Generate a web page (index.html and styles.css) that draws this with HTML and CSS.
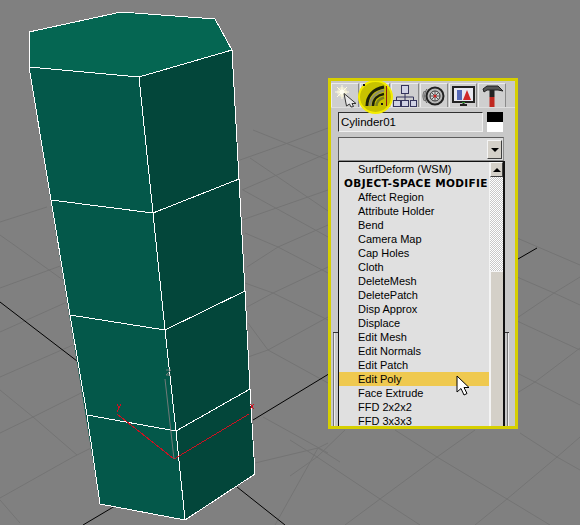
FILE: index.html
```html
<!DOCTYPE html>
<html lang="en">
<head>
<meta charset="utf-8">
<title>Modifier list</title>
<link rel="stylesheet" href="styles.css">
</head>
<body>
<main class="viewport">
  <svg class="scene" viewBox="0 0 580 525" width="580" height="525">
    <g class="grid">
      <path d="M0 222L47 207M0 235L17 247L63 280M0 288L63 265M0 332L67 302M0 377L73 345M0 390L33 417L77 455M0 433L33 417L83 392M0 498L73 457L93 447M0 500L20 523"/>
      <path d="M253 130L328 160M240 160L288 143L328 128M250 158L328 211M242 190L328 153M242 220L328 190M243 190L328 237M245 233L278 247L328 273M247 267L278 247L328 225M247 307L273 293L328 267M245 283L273 293L328 320M248 357L268 350L328 317M248 323L268 350L328 383M263 417L328 453M255 463L318 448L328 443M318 448L340 462M275 525L318 448"/>
      <path d="M290 440L317 457L380 499L420 525M395 430L437 457L507 499L550 525M520 433L557 457L580 470M345 430L317 457L290 476M475 525L507 499L557 457L580 437M345 525L380 499L437 457L475 430"/>
      <path d="M517 238L580 265M517 277L554 293L580 305M517 318L554 293L580 277M517 321L580 350M517 393L535 382L580 348M517 373L535 382L580 405"/>
    </g>
    <g class="axis">
      <path d="M0 302L77 361M253 420L518 259L537 248M83 525L115 506M237 487L285 525"/>
    </g>
    <polygon class="f-top" points="29,32 121,12 215,19 232,50 139,77 29,67"/>
    <polygon class="f-left" points="29,67 139,77 185,520 100,504"/>
    <polygon class="f-right" points="139,77 232,50 239,179 245,291 250,389 255,474 185,520"/>
    <g class="edge">
      <path d="M29 32L121 12L215 19L232 50L239 179L245 291L250 389L255 474L185 520L100 504L87 415L70 315L51 200L29 67Z"/>
      <path d="M29 67L139 77L232 50M139 77L153 213L165 330L176 431L185 520"/>
      <path d="M51 200L153 213L239 179M70 315L165 330L245 291M87 415L176 431L250 389"/>
    </g>
    <g class="gizmo-red">
      <path d="M117 414L174 459L249 414"/>
      <path d="M117 404L119 408L117 412M121 404L119 408M250 404L254 409M254 404L250 409"/>
    </g>
    <path class="gizmo-gray" d="M165 379L174 459M166 370H171L166 375H171"/>
  </svg>

  <aside class="panel">
    <nav class="tabs">
      <button class="tab">
        <svg viewBox="0 0 28 24" width="28" height="24">
          <circle cx="11" cy="8" r="5" class="glow"/>
          <path d="M11 1V15M4 8H18M6 3L16 13M16 3L6 13" class="spark"/>
          <circle cx="11" cy="8" r="2.500" fill="#fffef0"/>
          <path d="M13 9.500L25 19.500L21 19.500L22.500 22.500L20 23L18.500 20L15.500 22Z" fill="#e8e8e8" stroke="#333"/>
        </svg>
      </button>
      <button class="tab tab-active">
        <span class="halo"></span>
        <svg class="tab-icon" viewBox="0 0 28 24" width="28" height="24">
          <path d="M6 22C6 12 12 5 23 3" fill="none" stroke="#1b2108" stroke-width="3"/>
          <path d="M9 22C9 14 15 8 23 6.500" fill="none" stroke="#8f9068" stroke-width="2.500"/>
          <path d="M12 22C12 15 17 11 23 10" fill="none" stroke="#1b2108" stroke-width="2.500"/>
          <path d="M15.500 22C15.500 18 18 15 23 13.500" fill="none" stroke="#7c8020" stroke-width="2.500"/>
          <path d="M2 1H4M20 20H22" stroke="#111" stroke-width="2"/>
          <path d="M25.500 2V22" stroke="#8d1c10"/>
        </svg>
      </button>
      <button class="tab">
        <svg viewBox="0 0 26 24" width="26" height="24" class="hier">
          <rect x="9.500" y="1.500" width="7" height="8"/>
          <path d="M13 9.500V13M4.500 16V13H21.500V16M13 13V16"/>
          <rect x="1.500" y="16.500" width="7" height="6"/>
          <rect x="9.500" y="16.500" width="7" height="6"/>
          <rect x="18.500" y="16.500" width="6" height="6"/>
        </svg>
      </button>
      <button class="tab">
        <svg viewBox="0 0 26 24" width="26" height="24">
          <path d="M6 5C3 9 3 15 6 19M3.500 7C1.500 10 1.500 14 3.500 17" fill="none" stroke="#555"/>
          <circle cx="14" cy="12" r="8.500" fill="#b8b8b8" stroke="#222" stroke-width="2"/>
          <circle cx="14" cy="12" r="5" fill="#d8d8d8" stroke="#333"/>
          <path d="M14 7V17M9 12H19M10.500 8.500L17.500 15.500M17.500 8.500L10.500 15.500" stroke="#555"/>
          <circle cx="14" cy="12" r="1.500" fill="#d02020"/>
        </svg>
      </button>
      <button class="tab">
        <svg viewBox="0 0 26 24" width="26" height="24">
          <rect x="3" y="3" width="21" height="15" fill="#e8e8f0" stroke="#222" stroke-width="2"/>
          <rect x="7" y="6" width="5" height="10" fill="#5468b8"/>
          <path d="M13 16L17 6L21 16Z" fill="#d02828"/>
          <path d="M10 21H17M13.500 18V21" stroke="#222" stroke-width="2"/>
          <rect x="12" y="18" width="3" height="1" fill="#30a030"/>
        </svg>
      </button>
      <button class="tab">
        <svg viewBox="0 0 26 24" width="26" height="24">
          <path d="M4 5L8 2H19L24 7L19 6H8L5 8Z" fill="#555" stroke="#222"/>
          <rect x="10.500" y="6" width="5" height="7" fill="#222"/>
          <rect x="10.500" y="13" width="5" height="10" fill="#c02820"/>
        </svg>
      </button>
    </nav>

    <div class="name-row">
      <div class="name-field">Cylinder01</div>
      <div class="swatch"></div>
    </div>

    <div class="combo">
      <span class="combo-btn"><span class="arrow"></span></span>
    </div>

    <section class="stack">
      <div class="stack-frame"></div>
    </section>

    <div class="dropdown">
      <ul class="items">
        <li>SurfDeform (WSM)</li>
        <li class="heading">OBJECT-SPACE MODIFIE</li>
        <li>Affect Region</li>
        <li>Attribute Holder</li>
        <li>Bend</li>
        <li>Camera Map</li>
        <li>Cap Holes</li>
        <li>Cloth</li>
        <li>DeleteMesh</li>
        <li>DeletePatch</li>
        <li>Disp Approx</li>
        <li>Displace</li>
        <li>Edit Mesh</li>
        <li>Edit Normals</li>
        <li>Edit Patch</li>
        <li class="selected">Edit Poly</li>
        <li>Face Extrude</li>
        <li>FFD 2x2x2</li>
        <li>FFD 3x3x3</li>
      </ul>
      <div class="scrollbar">
        <span class="scroll-up"><span class="arrow arrow-up"></span></span>
        <span class="scroll-track"></span>
        <span class="scroll-thumb"></span>
      </div>
    </div>
  </aside>

  <svg class="cursor" viewBox="0 0 16 22" width="16" height="22">
    <path d="M1 1V17L5 13.500L8 20L11 18.500L8 12.500H13Z" fill="#fff" stroke="#000"/>
  </svg>
</main>
</body>
</html>
```

FILE: styles.css
```css
* { box-sizing: border-box; }
html, body { margin: 0; padding: 0; }
body { width: 580px; height: 525px; overflow: hidden; background: #808080; }

.viewport { position: relative; width: 580px; height: 525px; overflow: hidden; background: #808080; }
.scene { display: block; }
.grid path { fill: none; stroke: #747474; stroke-width: 1; }
.axis path { fill: none; stroke: #000; stroke-width: 1; }
.f-top { fill: #056652; }
.f-left { fill: #04584a; }
.f-right { fill: #03463a; }
.edge path { fill: none; stroke: #fff; stroke-width: 1; stroke-linejoin: round; shape-rendering: crispEdges; }
.gizmo-red path { fill: none; stroke: #cf1020; stroke-width: 1; shape-rendering: crispEdges; }
.gizmo-gray { fill: none; stroke: #707a78; stroke-width: 1; }

.panel {
  position: absolute; left: 328px; top: 78px; width: 190px; height: 351px;
  border: 3px solid #d6cf00; background: #c8c8c8; overflow: hidden;
  font-family: "Liberation Sans", Arial, sans-serif; color: #000;
  display: flex; flex-direction: column;
}

.tabs { display: flex; gap: 1px; padding: 2px 0 0 0; height: 27px; border-bottom: 1px solid #dedede; }
.tab {
  position: relative; width: 28px; height: 24px; padding: 0; margin: 0;
  border: 0; border-top: 1px solid #ececec; border-left: 1px solid #ececec; border-right: 1px solid #8a8a8a;
  background: #cfcfcf; display: flex; align-items: center; justify-content: center;
}
.tab svg { position: relative; display: block; flex: none; }
.glow { fill: #f4f0d0; opacity: .7; }
.spark { stroke: #fffbe0; stroke-width: 1; fill: none; }
.hier rect { fill: #d0d2e4; stroke: #34345c; }
.hier path { fill: none; stroke: #34345c; }
.tab-active { z-index: 1; width: 30px; }
.halo {
  position: absolute; left: -3px; top: -4px; width: 35px; height: 34px; border-radius: 50%;
  background: #c8c200; border: 2px solid #f4ec00;
}
.tab-icon { z-index: 1; }

.name-row { display: flex; gap: 4px; padding: 4px 0 0 7px; }
.name-field {
  width: 145px; height: 20px; padding: 1px 0 0 2px; font-size: 11.500px; line-height: 16px;
  background: #dcdcdc; border: 1px solid; border-color: #303030 #f0f0f0 #f0f0f0 #303030;
}
.swatch { width: 16px; height: 20px; background: linear-gradient(#000 50%, #fff 50%); }

.combo {
  margin: 5px 0 0 7px; width: 166px; height: 24px;
  background: #dcdcdc; border: 1px solid; border-color: #5c5c5c #8a8a8a #8a8a8a #5c5c5c;
  display: flex; justify-content: flex-end; padding: 2px 1px 0 0;
}
.combo-btn {
  width: 15px; height: 19px; background: #d4d0c8;
  border: 1px solid; border-color: #f4f4f4 #404040 #404040 #f4f4f4;
  display: flex; align-items: center; justify-content: center;
}
.arrow { width: 0; height: 0; border: 4px solid transparent; border-top: 4px solid #000; border-bottom: 0; }
.arrow-up { border-top: 0; border-bottom: 4px solid #000; }

.stack { flex: 1; min-height: 0; padding: 171px 0 0 2px; }
.stack-frame {
  height: 100%; width: 176px; border-top: 1px solid #333;
  box-shadow: inset 1px 0 0 #777, inset 2px 0 0 #eee, inset -1px 0 0 #eee, inset -2px 0 0 #777;
}

.dropdown {
  position: absolute; left: 7px; top: 80px; display: flex; width: 167px; height: 268px; background: #e0e0e0;
  border: 1px solid #111; border-bottom: 0; border-right-width: 2px; overflow: hidden;
}
.items { list-style: none; margin: 0; padding: 0; width: 150px; flex: none; overflow: hidden; }
.items li {
  height: 14px; padding-left: 19px; font-size: 11px; line-height: 14px; white-space: nowrap;
}
.items li.heading {
  padding-left: 5px; font-family: "DejaVu Sans", sans-serif; font-weight: 700; font-size: 10.500px; letter-spacing: .35px;
}
.items li.selected { background: #efc94f; }

.scrollbar { flex: 1; display: flex; flex-direction: column; border-left: 1px solid #f4f4f4; }
.scroll-up {
  height: 15px; flex: none; background: #d4d0c8;
  border: 1px solid; border-color: #f4f4f4 #404040 #404040 #f4f4f4;
  display: flex; align-items: center; justify-content: center;
}
.scroll-track {
  height: 94px; flex: none;
  background: repeating-conic-gradient(#fff 0 25%, #c8c8c8 0 50%) 0 0 / 2px 2px;
}
.scroll-thumb { flex: 1; background: #d4d0c8; border-top: 1px solid #f4f4f4; border-left: 1px solid #f4f4f4; }

.cursor { position: absolute; left: 456px; top: 375px; }
```
